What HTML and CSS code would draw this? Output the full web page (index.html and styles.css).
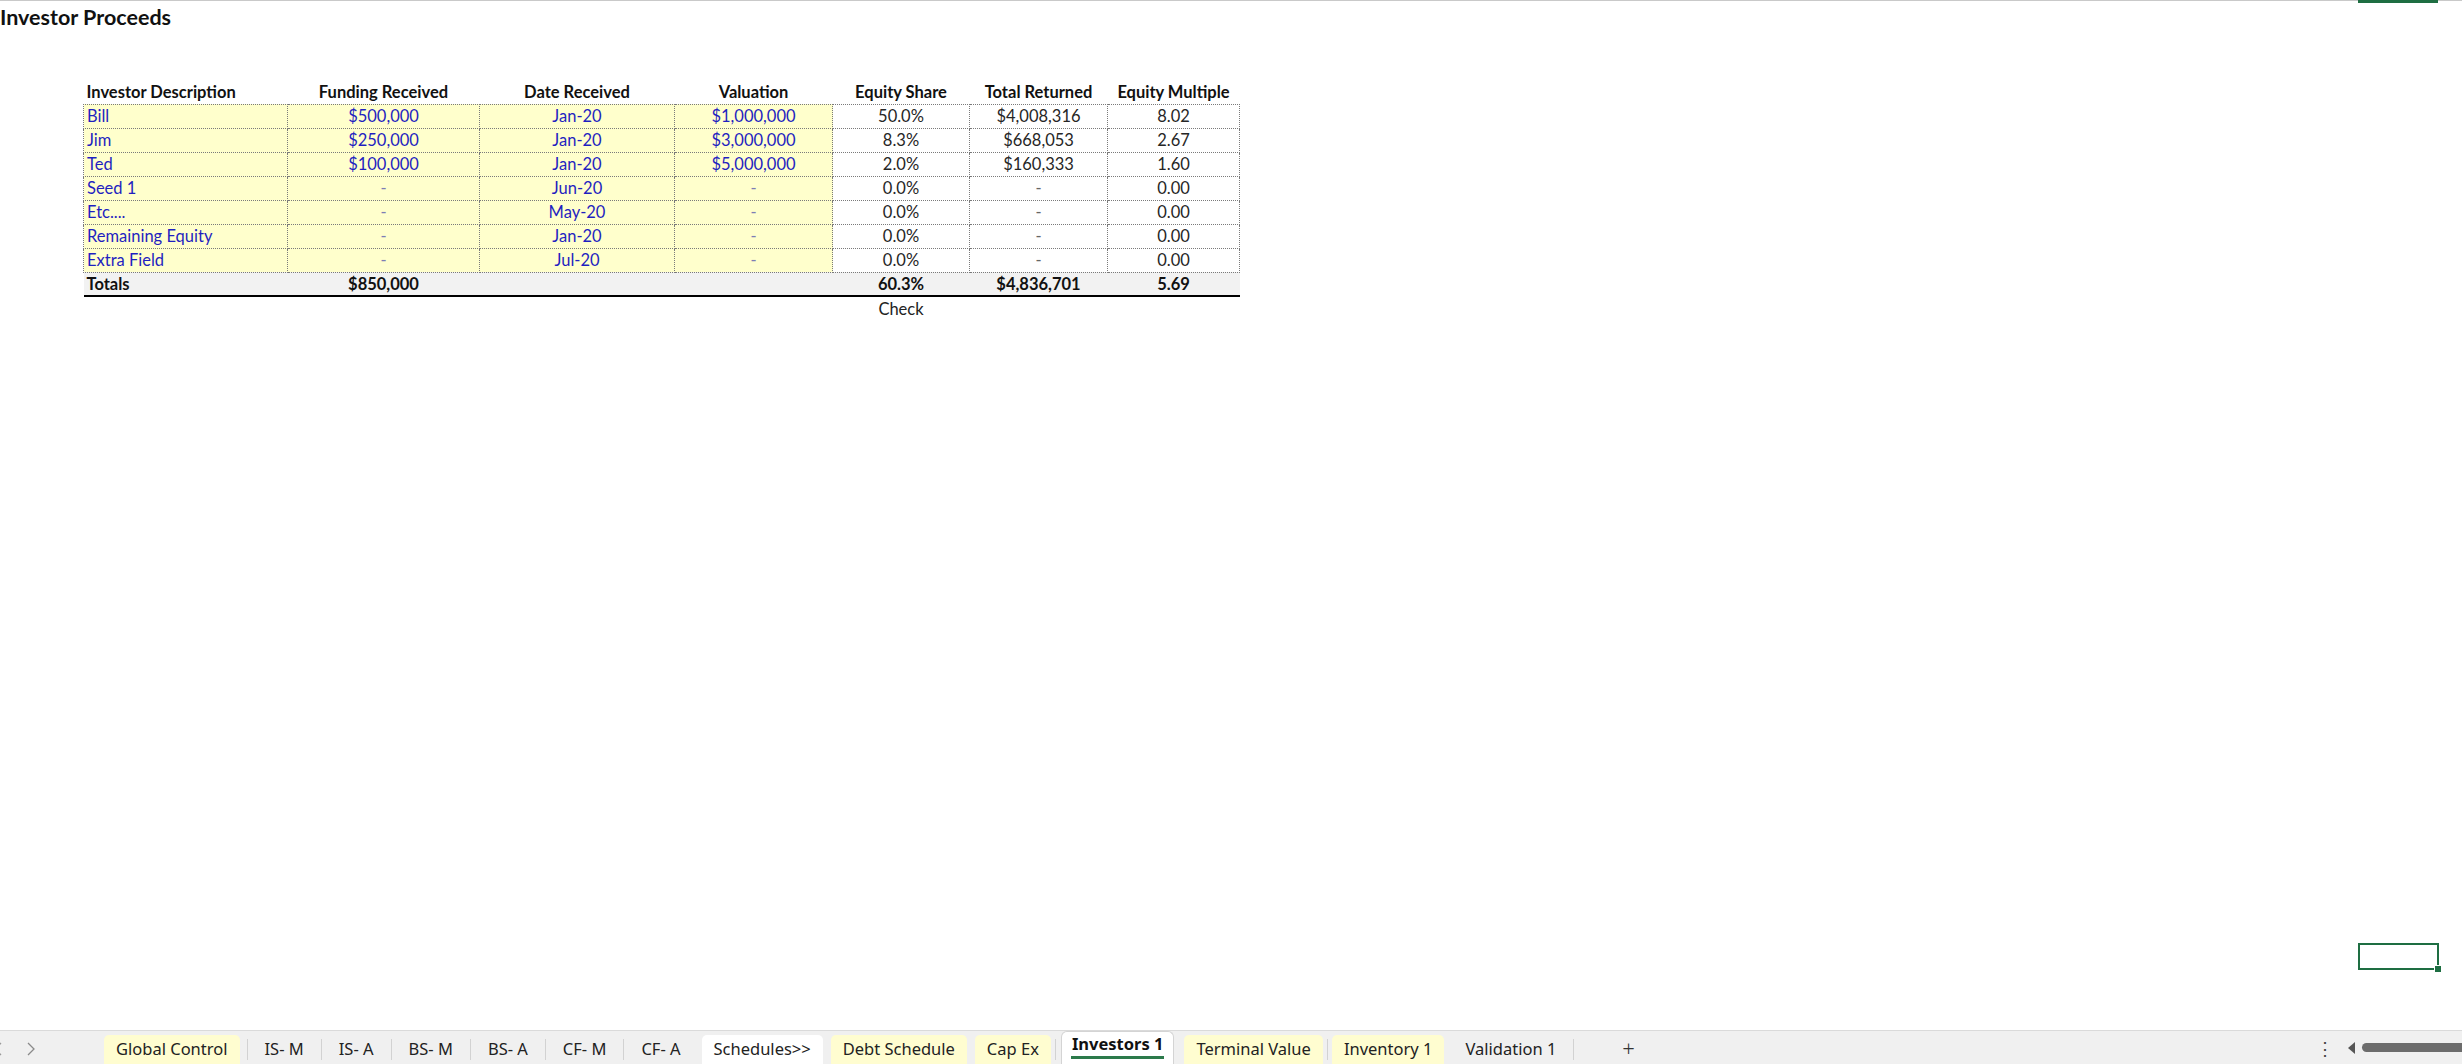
FILE: index.html
```html
<!DOCTYPE html>
<html lang="en">
<head>
	<meta charset="UTF-8">
	<title>Investors 1</title>
	<link rel="stylesheet" href="styles.css">
</head>
<body>
    <div class="sheet">
        <span class="colmark"></span>
        <h1 class="title">Investor Proceeds</h1>
        <table class="grid">
            <colgroup>
                <col class="c1"><col class="c2"><col class="c3"><col class="c4"><col class="c5"><col class="c6"><col class="c7">
            </colgroup>
            <thead>
                <tr>
                    <th class="left">Investor Description</th>
                    <th>Funding Received</th>
                    <th>Date Received</th>
                    <th>Valuation</th>
                    <th>Equity Share</th>
                    <th>Total Returned</th>
                    <th>Equity Multiple</th>
                </tr>
            </thead>
            <tbody>
                <tr><td class="in left">Bill</td><td class="in">$500,000</td><td class="in">Jan-20</td><td class="in">$1,000,000</td><td>50.0%</td><td>$4,008,316</td><td>8.02</td></tr>
                <tr><td class="in left">Jim</td><td class="in">$250,000</td><td class="in">Jan-20</td><td class="in">$3,000,000</td><td>8.3%</td><td>$668,053</td><td>2.67</td></tr>
                <tr><td class="in left">Ted</td><td class="in">$100,000</td><td class="in">Jan-20</td><td class="in">$5,000,000</td><td>2.0%</td><td>$160,333</td><td>1.60</td></tr>
                <tr><td class="in left">Seed 1</td><td class="in dash">-</td><td class="in">Jun-20</td><td class="in dash">-</td><td>0.0%</td><td class="dash">-</td><td>0.00</td></tr>
                <tr><td class="in left">Etc....</td><td class="in dash">-</td><td class="in">May-20</td><td class="in dash">-</td><td>0.0%</td><td class="dash">-</td><td>0.00</td></tr>
                <tr><td class="in left">Remaining Equity</td><td class="in dash">-</td><td class="in">Jan-20</td><td class="in dash">-</td><td>0.0%</td><td class="dash">-</td><td>0.00</td></tr>
                <tr><td class="in left">Extra Field</td><td class="in dash">-</td><td class="in">Jul-20</td><td class="in dash">-</td><td>0.0%</td><td class="dash">-</td><td>0.00</td></tr>
            </tbody>
            <tfoot>
                <tr class="totals"><td class="left">Totals</td><td>$850,000</td><td></td><td></td><td>60.3%</td><td>$4,836,701</td><td>5.69</td></tr>
                <tr class="check"><td></td><td></td><td></td><td></td><td>Check</td><td></td><td></td></tr>
            </tfoot>
        </table>
        <div class="cursor"></div>
    </div>

    <div class="tabbar">
        <div class="nav">
            <svg class="chev cut" width="10" height="14" viewBox="0 0 10 14"><path d="M7 1 L1 7 L7 13" fill="none" stroke="#9a9a9a" stroke-width="1.3"/></svg>
            <svg class="chev" width="10" height="14" viewBox="0 0 10 14"><path d="M2 1 L8 7 L2 13" fill="none" stroke="#8a8a8a" stroke-width="1.3"/></svg>
        </div>
        <div class="tabs">
            <div class="tab"><span class="pill yellow">Global Control</span></div>
            <i class="sep"></i>
            <div class="tab"><span class="pill">IS- M</span></div>
            <i class="sep"></i>
            <div class="tab"><span class="pill">IS- A</span></div>
            <i class="sep"></i>
            <div class="tab"><span class="pill">BS- M</span></div>
            <i class="sep"></i>
            <div class="tab"><span class="pill">BS- A</span></div>
            <i class="sep"></i>
            <div class="tab"><span class="pill">CF- M</span></div>
            <i class="sep"></i>
            <div class="tab"><span class="pill">CF- A</span></div>
            <div class="tab tight"><span class="pill white">Schedules&gt;&gt;</span></div>
            <div class="tab tight"><span class="pill yellow">Debt Schedule</span></div>
            <div class="tab tight"><span class="pill yellow">Cap Ex</span></div>
            <i class="sep"></i>
            <div class="tab active"><span class="pill">Investors 1</span></div>
            <div class="tab tight"><span class="pill yellow">Terminal Value</span></div>
            <i class="sep"></i>
            <div class="tab tight"><span class="pill yellow">Inventory 1</span></div>
            <div class="tab"><span class="pill">Validation 1</span></div>
            <i class="sep"></i>
        </div>
        <div class="add">+</div>
        <div class="scroll">
            <span class="more">&#8942;</span>
            <svg width="8" height="12" viewBox="0 0 8 12"><path d="M7 0 L0 6 L7 12 Z" fill="#555"/></svg>
            <span class="thumb"></span>
        </div>
    </div>
</body>
</html>
```

FILE: styles.css
```css
*{
    margin: 0;
    padding: 0;
    box-sizing: border-box;
}
html,body{height: 100%;}
body{
    display: flex;
    flex-direction: column;
    background: #fff;
    color: #1d1d1d;
    font-family: Lato, "Liberation Sans", sans-serif;
    overflow: hidden;
}
.sheet{
    position: relative;
    flex: 1;
    border-top: 1px solid #c9c9c9;
}
.colmark{
    position: absolute;
    top: -1px;
    left: 2358px;
    width: 80px;
    height: 3px;
    background: #1e6e42;
}
.title{
    font-size: 21.5px;
    font-weight: bold;
    line-height: 32px;
    color: #111;
}
.grid{
    margin: 47px 0 0 83px;
    width: 1156px;
    table-layout: fixed;
    border-collapse: collapse;
    font-size: 16.5px;
}
.c1{width: 204px;}
.c2{width: 192px;}
.c3{width: 195px;}
.c4{width: 158px;}
.c5{width: 137px;}
.c6{width: 138px;}
.c7{width: 132px;}
.grid th,.grid td{
    height: 24px;
    padding: 0 3px;
    text-align: center;
    white-space: nowrap;
}
.grid th{
    font-weight: bold;
    color: #111;
}
.grid .left{text-align: left;}
.grid tbody td{
    border: 1px dotted #7a7a7a;
    color: #262626;
}
.grid tbody td.in{
    background: #ffffcc;
    color: #1f1fc0;
}
.grid tbody td.in.dash{color: #7d7db4;}
.grid tbody td.dash{color: #666;}
.totals td{
    background: #f2f2f2;
    font-weight: bold;
    color: #111;
    border-bottom: 2px solid #000;
}
.check td{
    color: #222;
}
.cursor{
    position: absolute;
    left: 2358px;
    top: 942px;
    width: 81px;
    height: 27px;
    border: 2px solid #1e6e42;
}
.cursor::after{
    content: "";
    position: absolute;
    right: -5px;
    bottom: -5px;
    width: 6px;
    height: 6px;
    background: #1e6e42;
    border: 1px solid #fff;
}

/* sheet tabs */
.tabbar{
    height: 34px;
    display: flex;
    align-items: stretch;
    background: #f0f0f0;
    border-top: 1px solid #dadada;
    font-family: "Noto Sans", "Open Sans", sans-serif;
    font-size: 16.5px;
    color: #222;
}
.nav{
    width: 97px;
    display: flex;
    align-items: center;
    gap: 22px;
    padding-top: 2px;
}
.chev.cut{margin-left: -6px;}
.tabs{
    display: flex;
    align-items: stretch;
}
.tab{
    display: flex;
    align-items: flex-end;
    padding: 0 7px;
}
.tab.tight{padding: 0 4px;}
.pill{
    display: block;
    height: 29px;
    line-height: 28px;
    padding: 0 10px;
    border-radius: 5px 5px 0 0;
    white-space: nowrap;
}
.pill.yellow,.pill.white{padding: 0 12px;}
.pill.yellow{background: #fffdd0;}
.pill.white{background: #fff;}
.sep{
    width: 1px;
    height: 21px;
    align-self: center;
    margin-top: 3px;
    background: #d2d2d2;
}
.tab.active{
    padding: 0;
    margin: 0 6px 0 5px;
    background: #fff;
    border: 1px solid #d4d4d4;
    border-bottom: 0;
    border-radius: 6px 6px 0 0;
    align-items: flex-start;
}
.tab.active .pill{
    height: auto;
    margin: 0 9px;
    padding: 0 1px;
    line-height: 24px;
    font-weight: bold;
    color: #111;
    border-radius: 0;
    border-bottom: 3px solid #2c7a4b;
}
.add{
    margin-left: 48px;
    display: flex;
    align-items: center;
    font-size: 22px;
    font-weight: 300;
    color: #333;
    padding-top: 1px;
}
.scroll{
    margin-left: auto;
    display: flex;
    align-items: center;
    gap: 14px;
}
.more{
    font-size: 18px;
    color: #444;
}
.thumb{
    width: 100px;
    height: 9px;
    margin-left: -8px;
    border-radius: 5px 0 0 5px;
    background: #6c6c6c;
}
```
